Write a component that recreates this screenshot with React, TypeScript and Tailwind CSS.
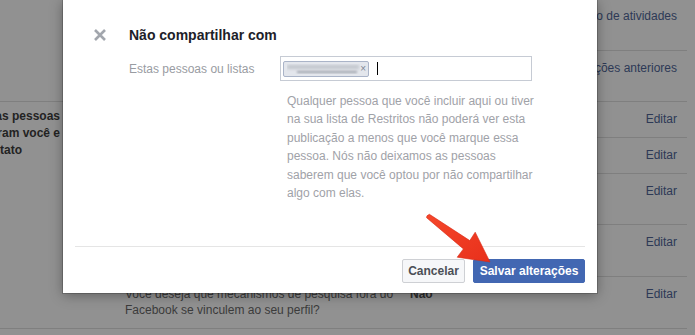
import React from 'react';

const font = { fontFamily: '"Liberation Sans", Arial, Helvetica, sans-serif' };

interface RowProps {
  question?: React.ReactNode;
  value?: string;
  action: string;
  h: string;
  last?: boolean;
}

const Row: React.FC<RowProps> = ({ question, value, action, h, last }) => (
  <div className={`flex items-start pt-[9px] ${h} ${last ? '' : 'border-b border-[#7f7f7f]'}`}>
    <div className="w-[285px] text-[12px] leading-[16px] text-[#3b3b3b]">{question}</div>
    <div className="flex-1 text-[12px] leading-[16px] font-bold text-[#2e2e2e]">{value}</div>
    <div className="pr-[10px] text-[12px] leading-[16px] text-[#2d3956]">{action}</div>
  </div>
);

const CloseIcon = () => (
  <svg width="12" height="12" viewBox="0 0 12 12" className="shrink-0">
    <path d="M1 1 L11 11 M11 1 L1 11" stroke="#a2a6ad" strokeWidth="2.6" />
  </svg>
);

const Arrow = () => (
  <svg width="695" height="335" viewBox="0 0 695 335" className="absolute inset-0 pointer-events-none">
    <defs>
      <linearGradient id="ar" x1="0" y1="0" x2="1" y2="1">
        <stop offset="0" stopColor="#f5472b" />
        <stop offset="1" stopColor="#e8301b" />
      </linearGradient>
    </defs>
    <path
      d="M429.4 214.3 L469.8 240.6 L475.2 232.2 L490 262 L457.2 257.2 L463.4 248.9 L426.6 217.7 Q426 215.6 429.4 214.3 Z"
      fill="url(#ar)"
      stroke="#d92a16"
      strokeWidth="0.6"
      strokeLinejoin="round"
    />
  </svg>
);

export default function App() {
  return (
    <div style={font} className="relative h-[335px] w-[695px] overflow-hidden bg-[#919191]">
      {/* page underneath the overlay */}
      <div className="-ml-[42px] flex w-[729px] flex-col">
        <div className="flex border-b border-[#7f7f7f]">
          <div className="w-[167px]" />
          <div className="flex flex-1 flex-col">
            <div className="h-[51px] border-b border-[#7f7f7f] pt-[8px] pr-[10px] text-right text-[12px] leading-[16px] text-[#2d3956]">
              Usar registro de atividades
            </div>
            <div className="h-[50px] pt-[9px] pr-[10px] text-right text-[12px] leading-[16px] text-[#2d3956]">
              Limitar publicações anteriores
            </div>
          </div>
        </div>
        <div className="flex border-b border-[#7f7f7f]">
          <div className="w-[167px] pt-[6px] text-[12px] font-bold leading-[17px] text-[#232323]">
            Como as pessoas
            <br />
            encontram você e entram
            <br />
            em contato
          </div>
          <div className="flex flex-1 flex-col">
            <Row h="h-[36px]" action="Editar" />
            <Row h="h-[36px]" action="Editar" />
            <Row h="h-[51px]" action="Editar" />
            <Row h="h-[52px]" action="Editar" />
            <Row
              h="h-[51px]"
              last
              question={
                <>
                  Você deseja que mecanismos de pesquisa fora do
                  <br />
                  Facebook se vinculem ao seu perfil?
                </>
              }
              value="Não"
              action="Editar"
            />
          </div>
        </div>
      </div>

      {/* dialog */}
      <div className="absolute left-[63px] top-0 flex h-[293px] w-[534px] flex-col bg-white shadow-[0_2px_12px_rgba(0,0,0,0.35),0_0_0_1px_rgba(0,0,0,0.18)]">
        <div className="flex items-center pl-[31px] pt-[26px]">
          <CloseIcon />
          <div className="ml-[23px] text-[14px] font-bold leading-[18px] text-[#1d2129]">Não compartilhar com</div>
        </div>
        <div className="mt-[12px] flex items-center pl-[66px]">
          <div className="w-[151px] text-[12px] text-[#999ca2]">Estas pessoas ou listas</div>
          <div className="flex h-[25px] w-[252px] items-center border border-[#c6cbd4] pl-[2px]">
            <div className="flex h-[16px] w-[86px] items-center rounded-[2px] border border-[#aab4c8] bg-[#e3e6ec] pl-[3px] pr-[2px]">
              <div className="flex h-[10px] flex-1 flex-col justify-center gap-[2px] overflow-hidden">
                <div className="h-[4px] w-[72px] bg-[#c2c6cd] blur-[1.5px]" />
                <div className="ml-[10px] h-[2px] w-[60px] bg-[#9ea3ac] blur-[1px]" />
              </div>
              <span className="text-[10px] leading-[10px] text-[#7e8694]">×</span>
            </div>
            <div className="ml-[8px] h-[13px] w-[1px] bg-black" />
          </div>
        </div>
        <div className="mt-[11px] pl-[224px] text-[12px] leading-[18.4px] text-[#9fa2a8]">
          Qualquer pessoa que você incluir aqui ou tiver
          <br />
          na sua lista de Restritos não poderá ver esta
          <br />
          publicação a menos que você marque essa
          <br />
          pessoa. Nós não deixamos as pessoas
          <br />
          saberem que você optou por não compartilhar
          <br />
          algo com elas.
        </div>
        <div className="mt-auto mx-[12px] flex justify-end gap-[8px] border-t border-[#e5e5e5] pt-[12px] pb-[10px]">
          <button className="h-[24px] w-[63px] rounded-[2px] border border-[#ced0d4] bg-[#f6f7f9] text-[12px] font-bold text-[#4b4f56]">
            Cancelar
          </button>
          <button className="h-[24px] w-[112px] rounded-[2px] border border-[#4267b2] bg-[#4267b2] text-[12px] font-bold text-white">
            Salvar alterações
          </button>
        </div>
      </div>

      <Arrow />
    </div>
  );
}
